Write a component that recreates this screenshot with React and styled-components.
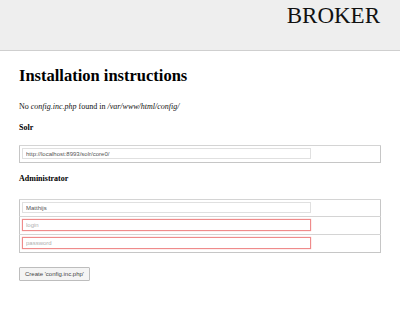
import React from "react";
import styled, { createGlobalStyle } from "styled-components";

const GlobalStyle = createGlobalStyle`
  html, body {
    margin: 0;
    padding: 0;
    background: #ffffff;
  }
  body {
    font-family: "Liberation Serif", "Times New Roman", serif;
    color: #000;
  }
`;

const Header = styled.header`
  height: 50px;
  background: #eeeeee;
  border-bottom: 1px solid #cfcfcf;
  display: flex;
  justify-content: flex-end;
  padding: 0 20px 0 0;
`;

const Brand = styled.div`
  font-family: "Liberation Serif", "Times New Roman", serif;
  font-size: 23px;
  line-height: 26px;
  margin-top: 3px;
  color: #111;
`;

const Main = styled.main`
  padding: 0 19px;
  width: 362px;
`;

const Title = styled.h1`
  font-size: 16.5px;
  line-height: 20px;
  font-weight: bold;
  margin: 15px 0 0;
`;

const Intro = styled.p`
  font-size: 8px;
  line-height: 10px;
  margin: 16px 0 0;
  color: #111;

  em {
    font-style: italic;
  }
`;

const SectionLabel = styled.h2`
  font-size: 8px;
  line-height: 10px;
  font-weight: bold;
  margin: ${(p) => p.$top}px 0 0;
`;

const FormTable = styled.table`
  width: 100%;
  border-collapse: collapse;
  border: 1px solid #c6c6c6;
  margin-top: ${(p) => p.$top}px;
`;

const Cell = styled.td`
  padding: 2px 2px 3px;
  border-top: 1px solid #d4d4d4;
`;

const Field = styled.input`
  display: block;
  box-sizing: border-box;
  width: 289px;
  height: ${(p) => (p.$invalid ? 12 : 11)}px;
  margin: 0;
  padding: 0 3px;
  font-family: "Liberation Sans", Arial, sans-serif;
  font-size: 6px;
  color: #555;
  background: #fff;
  border: 1px solid ${(p) => (p.$invalid ? "#ef8b8b" : "#e0e0e0")};
  box-shadow: ${(p) => (p.$invalid ? "0 0 1px #f29a9a" : "none")};
  outline: none;

  &::placeholder {
    color: #b0b0b0;
  }
`;

const SubmitButton = styled.button`
  display: block;
  box-sizing: border-box;
  margin-top: 14px;
  height: 14px;
  width: 71px;
  padding: 0;
  font-family: "Liberation Sans", Arial, sans-serif;
  font-size: 6px;
  color: #444;
  background: #f4f4f4;
  border: 1px solid #bdbdbd;
  border-radius: 1px;
`;

export default function App() {
  return (
    <>
      <GlobalStyle />
      <Header>
        <Brand>BROKER</Brand>
      </Header>
      <Main>
        <Title>Installation instructions</Title>
        <Intro>
          No <em>config.inc.php</em> found in <em>/var/www/html/config/</em>
        </Intro>
        <SectionLabel $top={11}>Solr</SectionLabel>
        <FormTable $top={12}>
          <tbody>
            <tr>
              <Cell>
                <Field defaultValue="http://localhost:8993/solr/core0/" />
              </Cell>
            </tr>
          </tbody>
        </FormTable>
        <SectionLabel $top={11}>Administrator</SectionLabel>
        <FormTable $top={15}>
          <tbody>
            <tr>
              <Cell>
                <Field defaultValue="Matthijs" />
              </Cell>
            </tr>
            <tr>
              <Cell>
                <Field $invalid placeholder="login" />
              </Cell>
            </tr>
            <tr>
              <Cell>
                <Field $invalid type="password" placeholder="password" />
              </Cell>
            </tr>
          </tbody>
        </FormTable>
        <SubmitButton>Create 'config.inc.php'</SubmitButton>
      </Main>
    </>
  );
}
